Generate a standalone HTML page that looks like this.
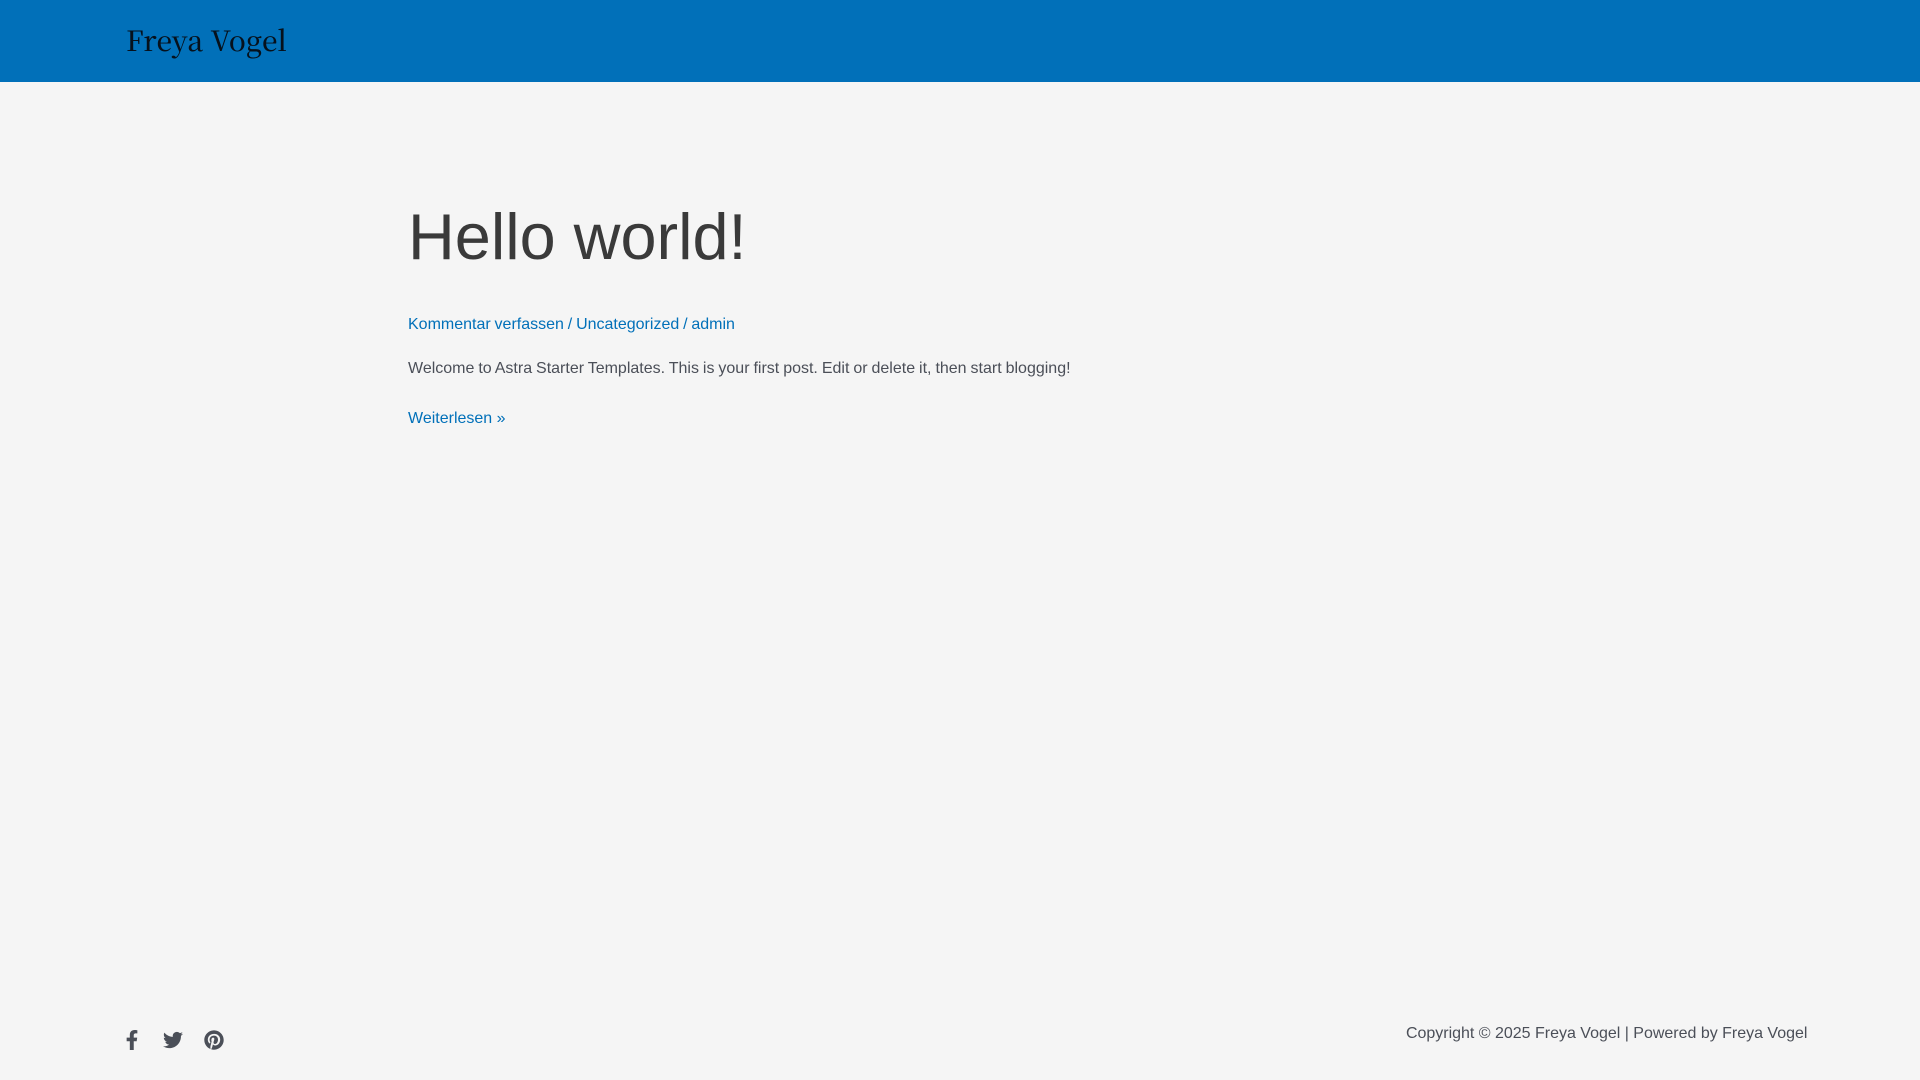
<!DOCTYPE html>
<html lang="de">
<head>
<meta charset="utf-8">
<title>Freya Vogel</title>
<style>
html,body{margin:0;padding:0;width:1920px;height:1080px;overflow:hidden;background:#f5f5f5;font-family:"Liberation Sans",Arial,sans-serif;font-size:16px;color:#4b4f58}
.t{position:absolute;white-space:nowrap;line-height:24px}
a{color:#0170b9;text-decoration:none}
#hdr{position:absolute;left:0;top:0;width:1920px;height:82px;background:#0170b9}
#logo{position:absolute;left:126px;top:21px;font-family:"Noto Serif CJK SC","Liberation Serif",serif;font-size:28px;font-weight:500;line-height:38px;color:#06111c;white-space:nowrap;letter-spacing:.2px;filter:blur(.3px)}
h1{position:absolute;left:408px;top:199px;margin:0;font-weight:400;font-size:64.8px;line-height:76px;color:#3a3a3a;white-space:nowrap}
svg{position:absolute;fill:#4b4f58}
</style>
</head>
<body>
<div id="hdr"><div id="logo">Freya Vogel</div></div>
<h1>Hello world!</h1>
<div class="t" style="left:408px;top:313px;color:#0170b9;word-spacing:-.6px"><a href="#">Kommentar verfassen</a> / <a href="#">Uncategorized</a> / <a href="#">admin</a></div>
<div class="t" style="left:408px;top:357px;word-spacing:-.5px">Welcome to Astra Starter Templates. This is your first post. Edit or delete it, then start blogging!</div>
<div class="t" style="left:408px;top:407px"><a href="#">Weiterlesen »</a></div>
<div class="t" style="right:112.6px;top:1022px;letter-spacing:-.01px">Copyright © 2025 Freya Vogel | Powered by Freya Vogel</div>

<svg style="left:125px;top:1030px" width="14" height="20" viewBox="0 0 320 512"><path d="M279.14 288l14.22-92.66h-88.91v-60.13c0-25.35 12.42-50.06 52.24-50.06h40.42V6.26S260.43 0 225.36 0c-73.22 0-121.08 44.38-121.08 124.72v70.62H22.89V288h81.39v224h100.17V288z"/></svg>
<svg style="left:163px;top:1030px" width="20" height="20" viewBox="0 0 512 512"><path d="M459.37 151.716c.325 4.548.325 9.097.325 13.645 0 138.72-105.583 298.558-298.558 298.558-59.452 0-114.68-17.219-161.137-47.106 8.447.974 16.568 1.299 25.34 1.299 49.055 0 94.213-16.568 130.274-44.832-46.132-.975-84.792-31.188-98.112-72.772 6.498.974 12.995 1.624 19.818 1.624 9.421 0 18.843-1.3 27.614-3.573-48.081-9.747-84.143-51.98-84.143-102.985v-1.299c13.969 7.797 30.214 12.67 47.431 13.319-28.264-18.843-46.781-51.005-46.781-87.391 0-19.492 5.197-37.36 14.294-52.954 51.655 63.675 129.3 105.258 216.365 109.807-1.624-7.797-2.599-15.918-2.599-24.04 0-57.828 46.782-104.934 104.934-104.934 30.213 0 57.502 12.67 76.67 33.137 23.715-4.548 46.456-13.32 66.599-25.34-7.798 24.366-24.366 44.833-46.132 57.827 21.117-2.273 41.584-8.122 60.426-16.243-14.292 20.791-32.161 39.308-52.628 54.253z"/></svg>
<svg style="left:204px;top:1030px" width="20" height="20" viewBox="0 0 496 512"><path d="M496 256c0 137-111 248-248 248-25.6 0-50.2-3.9-73.4-11.1 10.1-16.5 25.2-43.5 30.8-65 3-11.6 15.4-59 15.4-59 8.1 15.4 31.7 28.5 56.8 28.5 74.8 0 128.7-68.8 128.7-154.3 0-81.9-66.9-143.2-152.9-143.2-107 0-163.9 71.8-163.9 150.1 0 36.4 19.4 81.7 50.3 96.1 4.7 2.2 7.2 1.2 8.3-3.3.8-3.4 5-20.3 6.9-28.1.6-2.5.3-4.7-1.7-7.1-10.1-12.5-18.3-35.3-18.3-56.6 0-54.7 41.4-107.6 112-107.6 60.9 0 103.6 41.5 103.6 100.9 0 67.1-33.9 113.6-78 113.6-24.3 0-42.6-20.1-36.7-44.8 7-29.5 20.5-61.3 20.5-82.6 0-19-10.2-34.9-31.4-34.9-24.9 0-44.9 25.7-44.9 60.2 0 22 7.4 36.8 7.4 36.8s-24.5 103.8-29 123.2c-5 21.4-3 51.6-.9 71.2C65.4 450.9 0 361.1 0 256 0 119 111 8 248 8s248 111 248 248z"/></svg>
</body>
</html>
